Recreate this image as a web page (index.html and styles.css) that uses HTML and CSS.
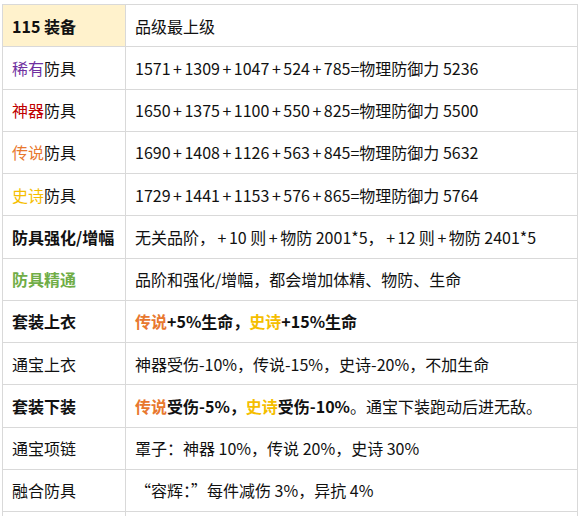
FILE: index.html
```html
<!DOCTYPE html>
<html lang="zh-CN">
<head>
<meta charset="utf-8">
<title>115装备</title>
<link rel="stylesheet" href="styles.css">
</head>
<body>
<table class="gear">
  <tr>
    <td class="key head b">115 装备</td>
    <td class="val">品级最上级</td>
  </tr>
  <tr>
    <td class="key"><span class="rare">稀有</span>防具</td>
    <td class="val">1571<span class="pl">+</span>1309<span class="pl">+</span>1047<span class="pl">+</span>524<span class="pl">+</span>785=物理防御力 5236</td>
  </tr>
  <tr>
    <td class="key"><span class="artifact">神器</span>防具</td>
    <td class="val">1650<span class="pl">+</span>1375<span class="pl">+</span>1100<span class="pl">+</span>550<span class="pl">+</span>825=物理防御力 5500</td>
  </tr>
  <tr>
    <td class="key"><span class="legend">传说</span>防具</td>
    <td class="val">1690<span class="pl">+</span>1408<span class="pl">+</span>1126<span class="pl">+</span>563<span class="pl">+</span>845=物理防御力 5632</td>
  </tr>
  <tr>
    <td class="key"><span class="epic">史诗</span>防具</td>
    <td class="val">1729<span class="pl">+</span>1441<span class="pl">+</span>1153<span class="pl">+</span>576<span class="pl">+</span>865=物理防御力 5764</td>
  </tr>
  <tr>
    <td class="key b">防具强化/增幅</td>
    <td class="val">无关品阶，<span class="pl">+</span>10 则<span class="pl">+</span>物防 2001*5，<span class="pl">+</span>12 则<span class="pl">+</span>物防 2401*5</td>
  </tr>
  <tr>
    <td class="key b mastery">防具精通</td>
    <td class="val">品阶和强化/增幅，都会增加体精、物防、生命</td>
  </tr>
  <tr>
    <td class="key b">套装上衣</td>
    <td class="val b"><span class="legend">传说</span>+5%生命，<span class="epic">史诗</span>+15%生命</td>
  </tr>
  <tr>
    <td class="key">通宝上衣</td>
    <td class="val">神器受伤-10%，传说-15%，史诗-20%，不加生命</td>
  </tr>
  <tr>
    <td class="key b">套装下装</td>
    <td class="val"><b><span class="legend">传说</span>受伤-5%，<span class="epic">史诗</span>受伤-10%</b>。通宝下装跑动后进无敌。</td>
  </tr>
  <tr>
    <td class="key">通宝项链</td>
    <td class="val">罩子：神器 10%，传说 20%，史诗 30%</td>
  </tr>
  <tr>
    <td class="key">融合防具</td>
    <td class="val">“容辉：”每件减伤 3%，异抗 4%</td>
  </tr>
  <tr>
    <td class="key">&nbsp;</td>
    <td class="val">&nbsp;</td>
  </tr>
</table>
</body>
</html>
```

FILE: styles.css
```css
html, body {
  margin: 0;
  background: #ffffff;
}
body {
  padding: 4px 4px 0 2px;
  font-family: "Noto Sans CJK SC", "Noto Sans", sans-serif;
  font-size: 16px;
  color: #111111;
}
.gear {
  border-collapse: collapse;
  width: 576px;
  table-layout: fixed;
}
.gear td {
  border: 1px solid #d9d9d9;
  height: 42.25px;
  padding: 0 0 0 9px;
  line-height: 20px;
  vertical-align: middle;
  white-space: nowrap;
  box-sizing: border-box;
}
.gear td.key {
  width: 123px;
}
.head {
  background: #fff2cc;
}
.b {
  font-weight: bold;
}
.pl {
  margin: 0 2.5px;
}
.rare { color: #7030a0; }
.artifact { color: #c00000; }
.legend { color: #e8782f; }
.epic { color: #f5be00; }
.mastery { color: #70ad47; }
```
